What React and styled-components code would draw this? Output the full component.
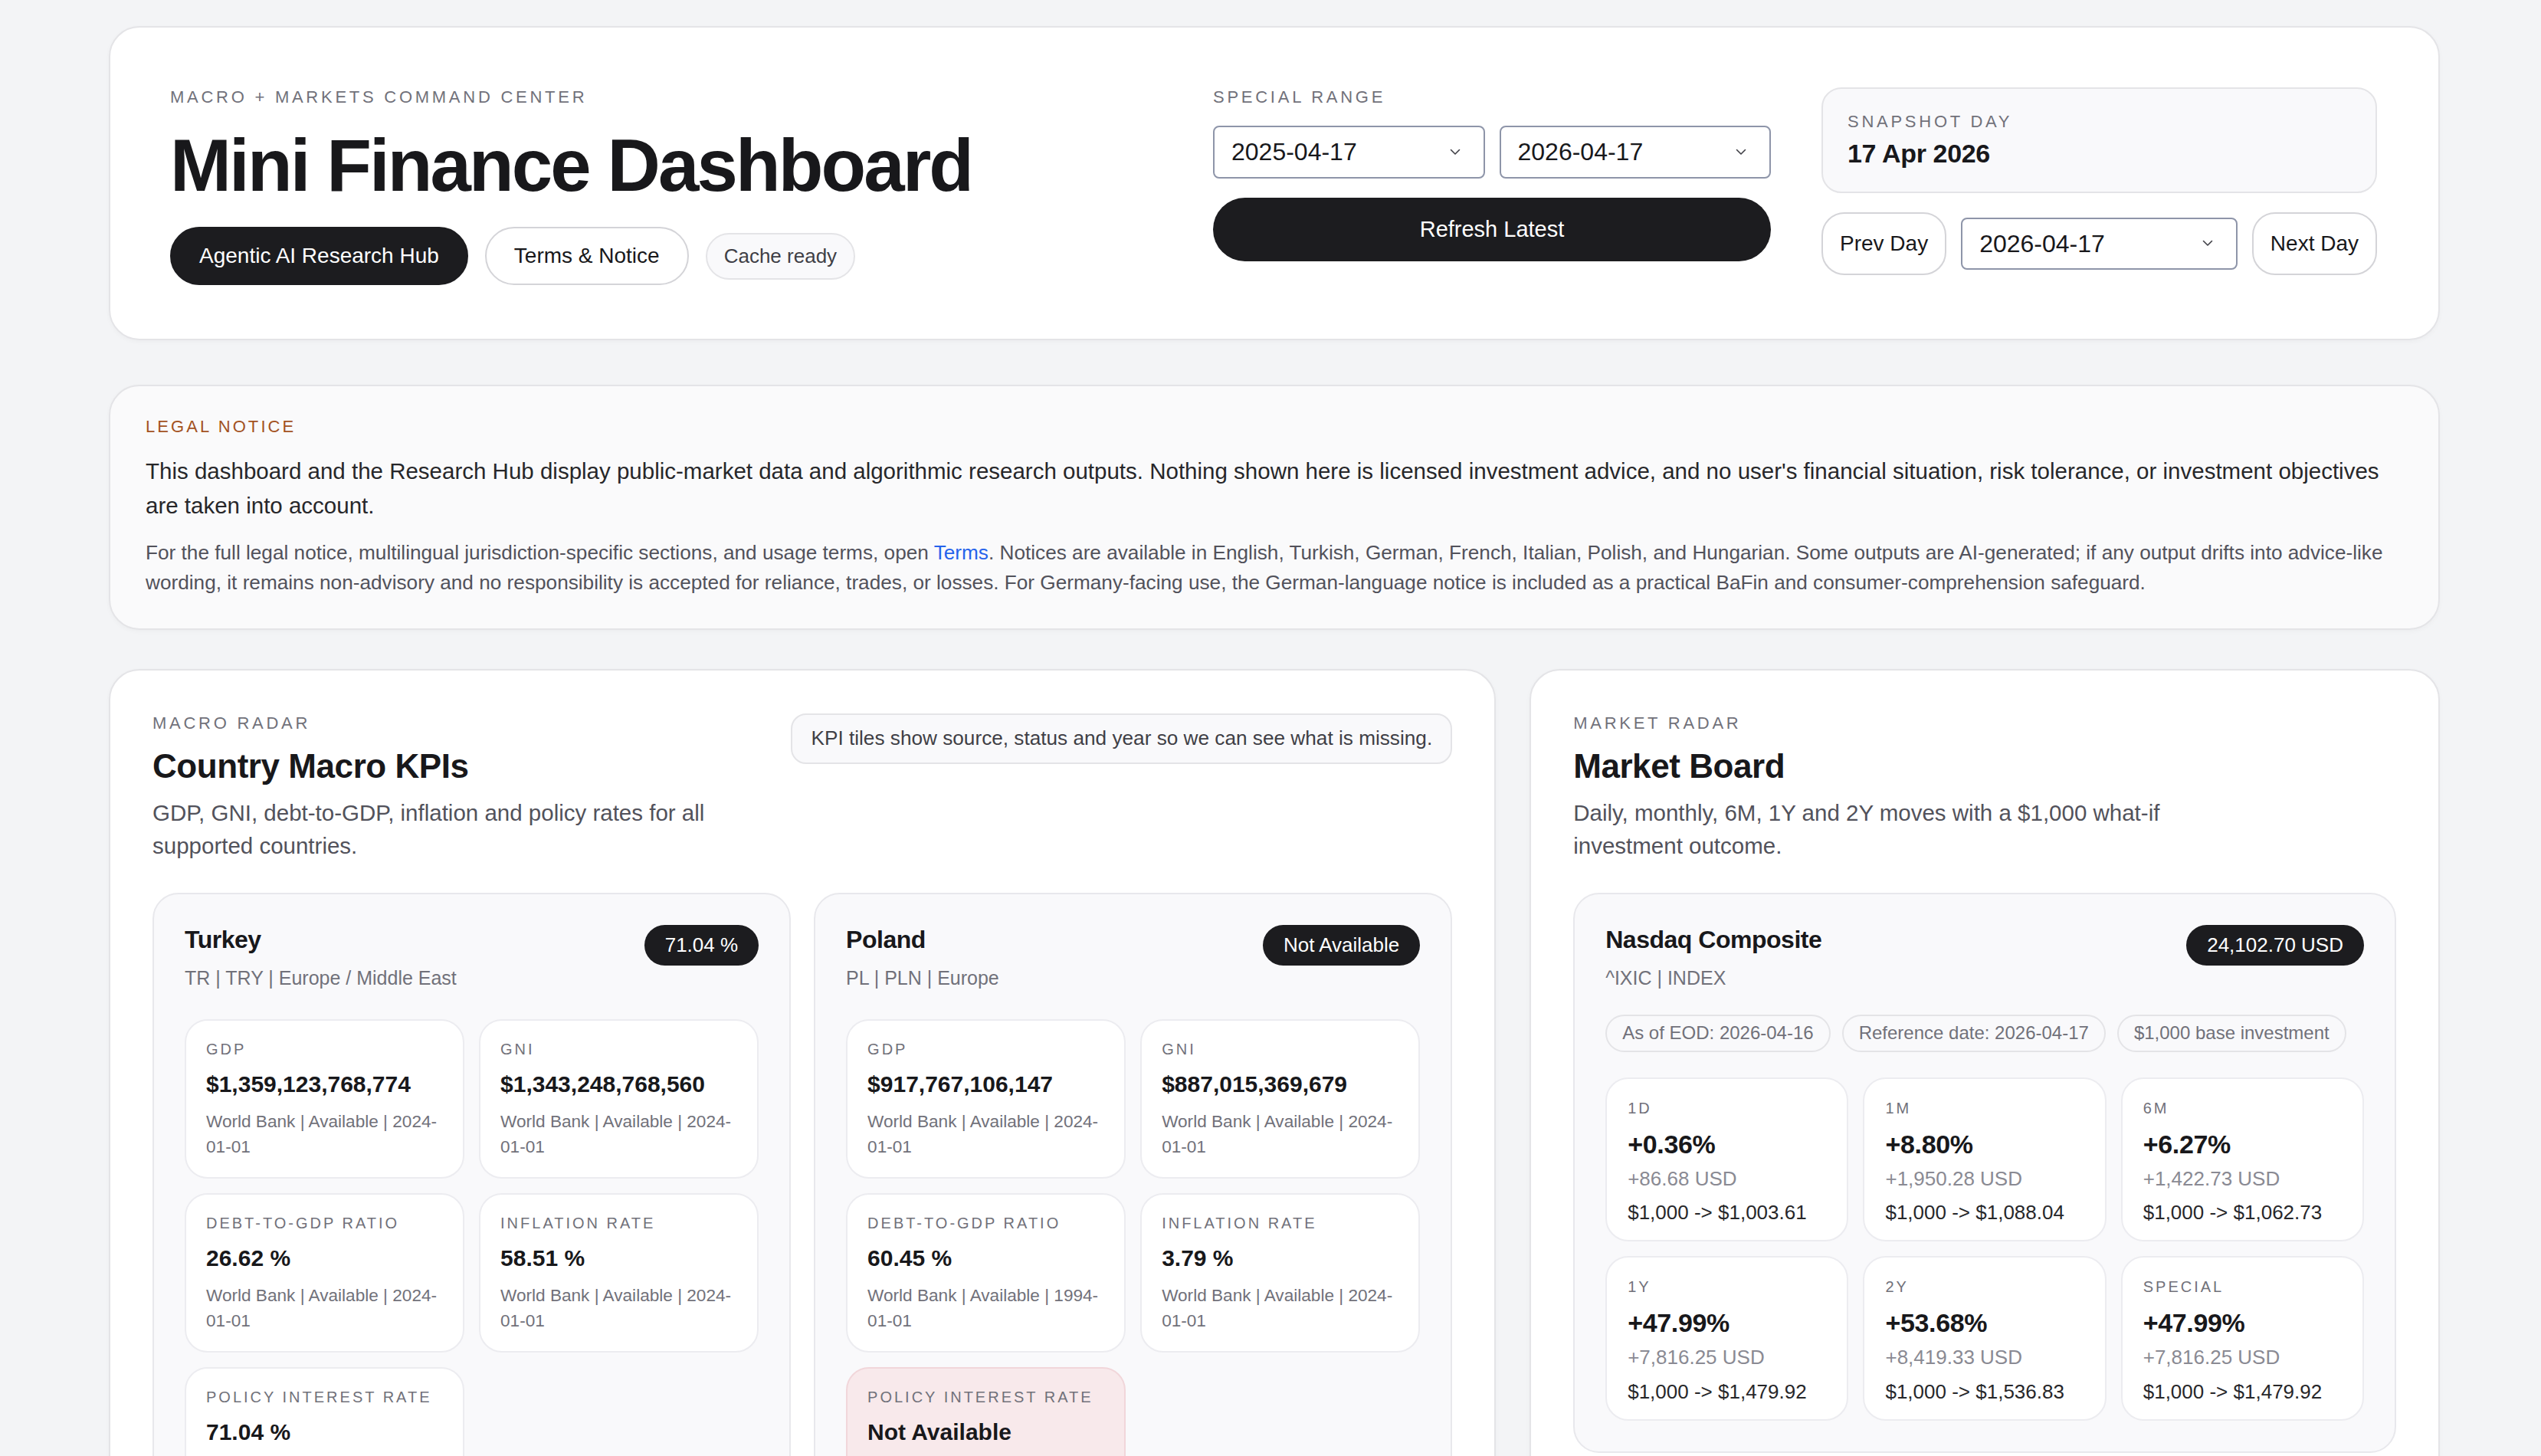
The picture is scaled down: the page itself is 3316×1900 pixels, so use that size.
import React from 'react';
import styled, {createGlobalStyle} from 'styled-components';

const GlobalStyle = createGlobalStyle`
    * {
        box-sizing: border-box;
    }

    body {
        margin: 0;
        background: #f3f4f6;
        color: #18181b;
        font-family: "Liberation Sans", Arial, Helvetica, sans-serif;
    }
`;

const Shell = styled.main`
    width: 3042px;
    margin-left: 142px;
    padding: 34px 0 80px;
`;

const Card = styled.section`
    background: ${(p) => (p.$muted ? '#fafafb' : '#ffffff')};
    border: 2px solid #e4e4e7;
    border-radius: 40px;
    box-shadow: 0 2px 6px rgba(24, 24, 27, 0.03);
`;

const HeaderCard = styled(Card)`
    display: flex;
    justify-content: space-between;
    align-items: flex-start;
    padding: 78px 80px 70px 78px;
`;

const Eyebrow = styled.div`
    font-size: 22px;
    line-height: 1.2;
    letter-spacing: ${(p) => (p.$tone === 'legal' ? '0.14em' : '0.17em')};
    text-transform: uppercase;
    color: ${(p) => (p.$tone === 'legal' ? '#a3521f' : '#71717a')};
`;

const Title = styled.h1`
    margin: 28px 0 0;
    font-size: 96px;
    line-height: 1;
    font-weight: 700;
    letter-spacing: -0.03em;
    color: #18181b;
`;

const Actions = styled.div`
    display: flex;
    align-items: center;
    gap: 22px;
    margin-top: 32px;
`;

const PillButton = styled.button`
    font-family: inherit;
    font-size: 28px;
    line-height: 1.2;
    padding: 19px 36px;
    border-radius: 999px;
    border: 2px solid ${(p) => (p.$dark ? '#1c1c1f' : '#d4d4d8')};
    background: ${(p) => (p.$dark ? '#1c1c1f' : '#ffffff')};
    color: ${(p) => (p.$dark ? '#ffffff' : '#18181b')};
`;

const StatusChip = styled.span`
    font-size: 26px;
    line-height: 1.2;
    padding: 13px 22px;
    border-radius: 999px;
    border: 2px solid #e4e4e7;
    background: #f9f9fb;
    color: #3f3f46;
`;

const Controls = styled.div`
    display: flex;
    gap: 66px;
`;

const RangeCol = styled.div`
    width: 728px;
`;

const DateRow = styled.div`
    display: grid;
    grid-template-columns: 1fr 1fr;
    gap: 19px;
    margin-top: 24px;
`;

const SelectBox = styled.div`
    display: flex;
    align-items: center;
    justify-content: space-between;
    flex: ${(p) => (p.$grow ? 1 : 'none')};
    padding: 13px 30px 13px 22px;
    border: 2px solid #8e95a9;
    border-radius: 8px;
    background: #ffffff;
    font-size: 32px;
    line-height: 1.2;
    color: #18181b;
`;

const RefreshButton = styled.button`
    display: block;
    width: 100%;
    margin-top: 25px;
    padding: 23px 0;
    border: none;
    border-radius: 999px;
    background: #1c1c1f;
    color: #ffffff;
    font-family: inherit;
    font-size: 29px;
    line-height: 1.27;
`;

const SnapshotCol = styled.div`
    width: 725px;
`;

const SnapshotBox = styled.div`
    padding: 30px 32px 29px;
    border: 2px solid #e4e4e7;
    border-radius: 26px;
    background: #f9f9fb;
`;

const SnapshotValue = styled.div`
    margin-top: 8px;
    font-size: 34px;
    line-height: 1.2;
    font-weight: 700;
    letter-spacing: -0.01em;
`;

const DayRow = styled.div`
    display: flex;
    align-items: center;
    gap: 19px;
    margin-top: 25px;
`;

const DayButton = styled.button`
    font-family: inherit;
    font-size: 28px;
    line-height: 1.2;
    padding: 22px 22px;
    border: 2px solid #d4d4d8;
    border-radius: 30px;
    background: #ffffff;
    color: #18181b;
`;

const LegalCard = styled(Card)`
    margin-top: 58px;
    padding: 40px 46px;
`;

const LegalLead = styled.p`
    margin: 22px 0 0;
    font-size: 29.5px;
    line-height: 45px;
    color: #27272a;
`;

const LegalFine = styled.p`
    margin: 20px 0 0;
    font-size: 26.2px;
    line-height: 39px;
    color: #52525b;

    a {
        color: #2563eb;
        text-decoration: none;
    }
`;

const Board = styled.div`
    display: grid;
    grid-template-columns: 1.524fr 1fr;
    gap: 44px;
    margin-top: 51px;
    align-items: start;
`;

const Panel = styled(Card)`
    padding: 56px 55px;
`;

const PanelHead = styled.div`
    display: flex;
    justify-content: space-between;
    align-items: flex-start;
    gap: 24px;
`;

const PanelTitle = styled.h2`
    margin: 16px 0 0;
    font-size: 44px;
    line-height: 1.2;
    font-weight: 700;
    letter-spacing: -0.01em;
`;

const PanelDesc = styled.p`
    margin: 12px 0 0;
    max-width: 800px;
    font-size: 29.5px;
    line-height: 43px;
    color: #52525b;
`;

const PanelNote = styled.div`
    flex-shrink: 0;
    padding: 15px 24px;
    border: 2px solid #e4e4e7;
    border-radius: 20px;
    background: #f9f9fb;
    font-size: 26.2px;
    line-height: 1.2;
    color: #3f3f46;
`;

const CardGrid = styled.div`
    display: grid;
    grid-template-columns: repeat(${(p) => p.$cols}, minmax(0, 1fr));
    gap: 30px;
    margin-top: 40px;
`;

const SubCard = styled.article`
    padding: 40px;
    border: 2px solid #e8e8ec;
    border-radius: 34px;
    background: #f9f9fb;
`;

const SubHead = styled.div`
    display: flex;
    justify-content: space-between;
    align-items: flex-start;
`;

const SubName = styled.h3`
    margin: 0;
    font-size: 32px;
    line-height: 1.2;
    font-weight: 700;
    letter-spacing: -0.015em;
`;

const SubMeta = styled.div`
    margin-top: 14px;
    font-size: 25px;
    line-height: 1.4;
    color: #71717a;
`;

const DarkPill = styled.span`
    padding: 11px 27px;
    border-radius: 999px;
    background: #1c1c1f;
    color: #ffffff;
    font-size: 26px;
    line-height: 1.2;
    white-space: nowrap;
`;

const ChipRow = styled.div`
    display: flex;
    gap: 15px;
    margin-top: 30px;
`;

const Chip = styled.span`
    padding: 8px 20px;
    border: 2px solid #e4e4e7;
    border-radius: 999px;
    background: #f9f9fb;
    font-size: 24px;
    line-height: 1.2;
    color: #71717a;
`;

const TileGrid = styled.div`
    display: grid;
    grid-template-columns: repeat(${(p) => p.$cols}, minmax(0, 1fr));
    gap: 19px;
    margin-top: ${(p) => p.$gap}px;
`;

const Tile = styled.div`
    padding: ${(p) => (p.$compact ? '26px 27px 18px' : '25px 26px 22px')};
    border: 2px solid ${(p) => (p.$missing ? '#f1d6da' : '#ececf0')};
    border-radius: 30px;
    background: ${(p) => (p.$missing ? '#f8e9eb' : '#ffffff')};
`;

const TileLabel = styled.div`
    font-size: 20px;
    line-height: 1.2;
    letter-spacing: 0.15em;
    text-transform: uppercase;
    color: #71717a;
`;

const TileValue = styled.div`
    margin-top: 16px;
    font-size: 30px;
    line-height: 1.2;
    font-weight: 700;
    color: #18181b;
`;

const TileSource = styled.div`
    margin-top: 15px;
    font-size: 22.6px;
    line-height: 1.46;
    color: #71717a;
`;

const MoveValue = styled.div`
    margin-top: 15px;
    font-size: 34px;
    line-height: 1.2;
    font-weight: 700;
    letter-spacing: -0.01em;
`;

const MoveUsd = styled.div`
    margin-top: 6px;
    font-size: 26px;
    line-height: 1.4;
    color: #8a8a93;
`;

const MoveWhatIf = styled.div`
    margin-top: 8px;
    font-size: 26px;
    line-height: 1.4;
    color: #27272a;
`;

function Chevron() {
    return (
        <svg width="14" height="9" viewBox="0 0 14 9" fill="none">
            <polyline points="1.5,1.5 7,7 12.5,1.5" stroke="#3f3f46" strokeWidth="1.6" strokeLinecap="round" strokeLinejoin="round" />
        </svg>
    );
}

function DateSelect({value, grow}) {
    return (
        <SelectBox $grow={grow}>
            <span>{value}</span>
            <Chevron />
        </SelectBox>
    );
}

const countries = [
    {
        name: 'Turkey',
        meta: 'TR | TRY | Europe / Middle East',
        badge: '71.04 %',
        kpis: [
            {label: 'GDP', value: '$1,359,123,768,774', source: 'World Bank | Available | 2024-01-01'},
            {label: 'GNI', value: '$1,343,248,768,560', source: 'World Bank | Available | 2024-01-01'},
            {label: 'Debt-to-GDP Ratio', value: '26.62 %', source: 'World Bank | Available | 2024-01-01'},
            {label: 'Inflation Rate', value: '58.51 %', source: 'World Bank | Available | 2024-01-01'},
            {label: 'Policy Interest Rate', value: '71.04 %', source: 'BIS | Available | 2026-04-01'},
        ],
    },
    {
        name: 'Poland',
        meta: 'PL | PLN | Europe',
        badge: 'Not Available',
        kpis: [
            {label: 'GDP', value: '$917,767,106,147', source: 'World Bank | Available | 2024-01-01'},
            {label: 'GNI', value: '$887,015,369,679', source: 'World Bank | Available | 2024-01-01'},
            {label: 'Debt-to-GDP Ratio', value: '60.45 %', source: 'World Bank | Available | 1994-01-01'},
            {label: 'Inflation Rate', value: '3.79 %', source: 'World Bank | Available | 2024-01-01'},
            {label: 'Policy Interest Rate', value: 'Not Available', source: 'BIS | Missing | -', missing: true},
        ],
    },
];

const moves = [
    {label: '1D', pct: '+0.36%', usd: '+86.68 USD', result: '$1,003.61'},
    {label: '1M', pct: '+8.80%', usd: '+1,950.28 USD', result: '$1,088.04'},
    {label: '6M', pct: '+6.27%', usd: '+1,422.73 USD', result: '$1,062.73'},
    {label: '1Y', pct: '+47.99%', usd: '+7,816.25 USD', result: '$1,479.92'},
    {label: '2Y', pct: '+53.68%', usd: '+8,419.33 USD', result: '$1,536.83'},
    {label: 'Special', pct: '+47.99%', usd: '+7,816.25 USD', result: '$1,479.92'},
];

export default function App() {
    return (
        <>
            <GlobalStyle />
            <Shell>
                <HeaderCard>
                    <div>
                        <Eyebrow>Macro + Markets Command Center</Eyebrow>
                        <Title>Mini Finance Dashboard</Title>
                        <Actions>
                            <PillButton $dark>Agentic AI Research Hub</PillButton>
                            <PillButton>Terms &amp; Notice</PillButton>
                            <StatusChip>Cache ready</StatusChip>
                        </Actions>
                    </div>
                    <Controls>
                        <RangeCol>
                            <Eyebrow>Special Range</Eyebrow>
                            <DateRow>
                                <DateSelect value="2025-04-17" />
                                <DateSelect value="2026-04-17" />
                            </DateRow>
                            <RefreshButton>Refresh Latest</RefreshButton>
                        </RangeCol>
                        <SnapshotCol>
                            <SnapshotBox>
                                <Eyebrow>Snapshot Day</Eyebrow>
                                <SnapshotValue>17 Apr 2026</SnapshotValue>
                            </SnapshotBox>
                            <DayRow>
                                <DayButton>Prev Day</DayButton>
                                <DateSelect value="2026-04-17" grow />
                                <DayButton>Next Day</DayButton>
                            </DayRow>
                        </SnapshotCol>
                    </Controls>
                </HeaderCard>

                <LegalCard $muted>
                    <Eyebrow $tone="legal">Legal Notice</Eyebrow>
                    <LegalLead>
                        This dashboard and the Research Hub display public-market data and algorithmic research outputs. Nothing shown here is licensed investment advice, and no user's financial situation, risk tolerance, or investment objectives are taken into account.
                    </LegalLead>
                    <LegalFine>
                        For the full legal notice, multilingual jurisdiction-specific sections, and usage terms, open <a href="#terms">Terms</a>. Notices are available in English, Turkish, German, French, Italian, Polish, and Hungarian. Some outputs are AI-generated; if any output drifts into advice-like wording, it remains non-advisory and no responsibility is accepted for reliance, trades, or losses. For Germany-facing use, the German-language notice is included as a practical BaFin and consumer-comprehension safeguard.
                    </LegalFine>
                </LegalCard>

                <Board>
                    <Panel>
                        <PanelHead>
                            <div>
                                <Eyebrow>Macro Radar</Eyebrow>
                                <PanelTitle>Country Macro KPIs</PanelTitle>
                                <PanelDesc>GDP, GNI, debt-to-GDP, inflation and policy rates for all supported countries.</PanelDesc>
                            </div>
                            <PanelNote>KPI tiles show source, status and year so we can see what is missing.</PanelNote>
                        </PanelHead>
                        <CardGrid $cols={2}>
                            {countries.map((country) => (
                                <SubCard key={country.name}>
                                    <SubHead>
                                        <div>
                                            <SubName>{country.name}</SubName>
                                            <SubMeta>{country.meta}</SubMeta>
                                        </div>
                                        <DarkPill>{country.badge}</DarkPill>
                                    </SubHead>
                                    <TileGrid $cols={2} $gap={36}>
                                        {country.kpis.map((kpi) => (
                                            <Tile key={kpi.label} $missing={kpi.missing}>
                                                <TileLabel>{kpi.label}</TileLabel>
                                                <TileValue>{kpi.value}</TileValue>
                                                <TileSource>{kpi.source}</TileSource>
                                            </Tile>
                                        ))}
                                    </TileGrid>
                                </SubCard>
                            ))}
                        </CardGrid>
                    </Panel>

                    <Panel>
                        <PanelHead>
                            <div>
                                <Eyebrow>Market Radar</Eyebrow>
                                <PanelTitle>Market Board</PanelTitle>
                                <PanelDesc>Daily, monthly, 6M, 1Y and 2Y moves with a $1,000 what-if investment outcome.</PanelDesc>
                            </div>
                        </PanelHead>
                        <CardGrid $cols={1}>
                            <SubCard>
                                <SubHead>
                                    <div>
                                        <SubName>Nasdaq Composite</SubName>
                                        <SubMeta>^IXIC | INDEX</SubMeta>
                                    </div>
                                    <DarkPill>24,102.70 USD</DarkPill>
                                </SubHead>
                                <ChipRow>
                                    <Chip>As of EOD: 2026-04-16</Chip>
                                    <Chip>Reference date: 2026-04-17</Chip>
                                    <Chip>$1,000 base investment</Chip>
                                </ChipRow>
                                <TileGrid $cols={3} $gap={33}>
                                    {moves.map((move) => (
                                        <Tile key={move.label} $compact>
                                            <TileLabel>{move.label}</TileLabel>
                                            <MoveValue>{move.pct}</MoveValue>
                                            <MoveUsd>{move.usd}</MoveUsd>
                                            <MoveWhatIf>$1,000 -&gt; {move.result}</MoveWhatIf>
                                        </Tile>
                                    ))}
                                </TileGrid>
                            </SubCard>
                        </CardGrid>
                    </Panel>
                </Board>
            </Shell>
        </>
    );
}
